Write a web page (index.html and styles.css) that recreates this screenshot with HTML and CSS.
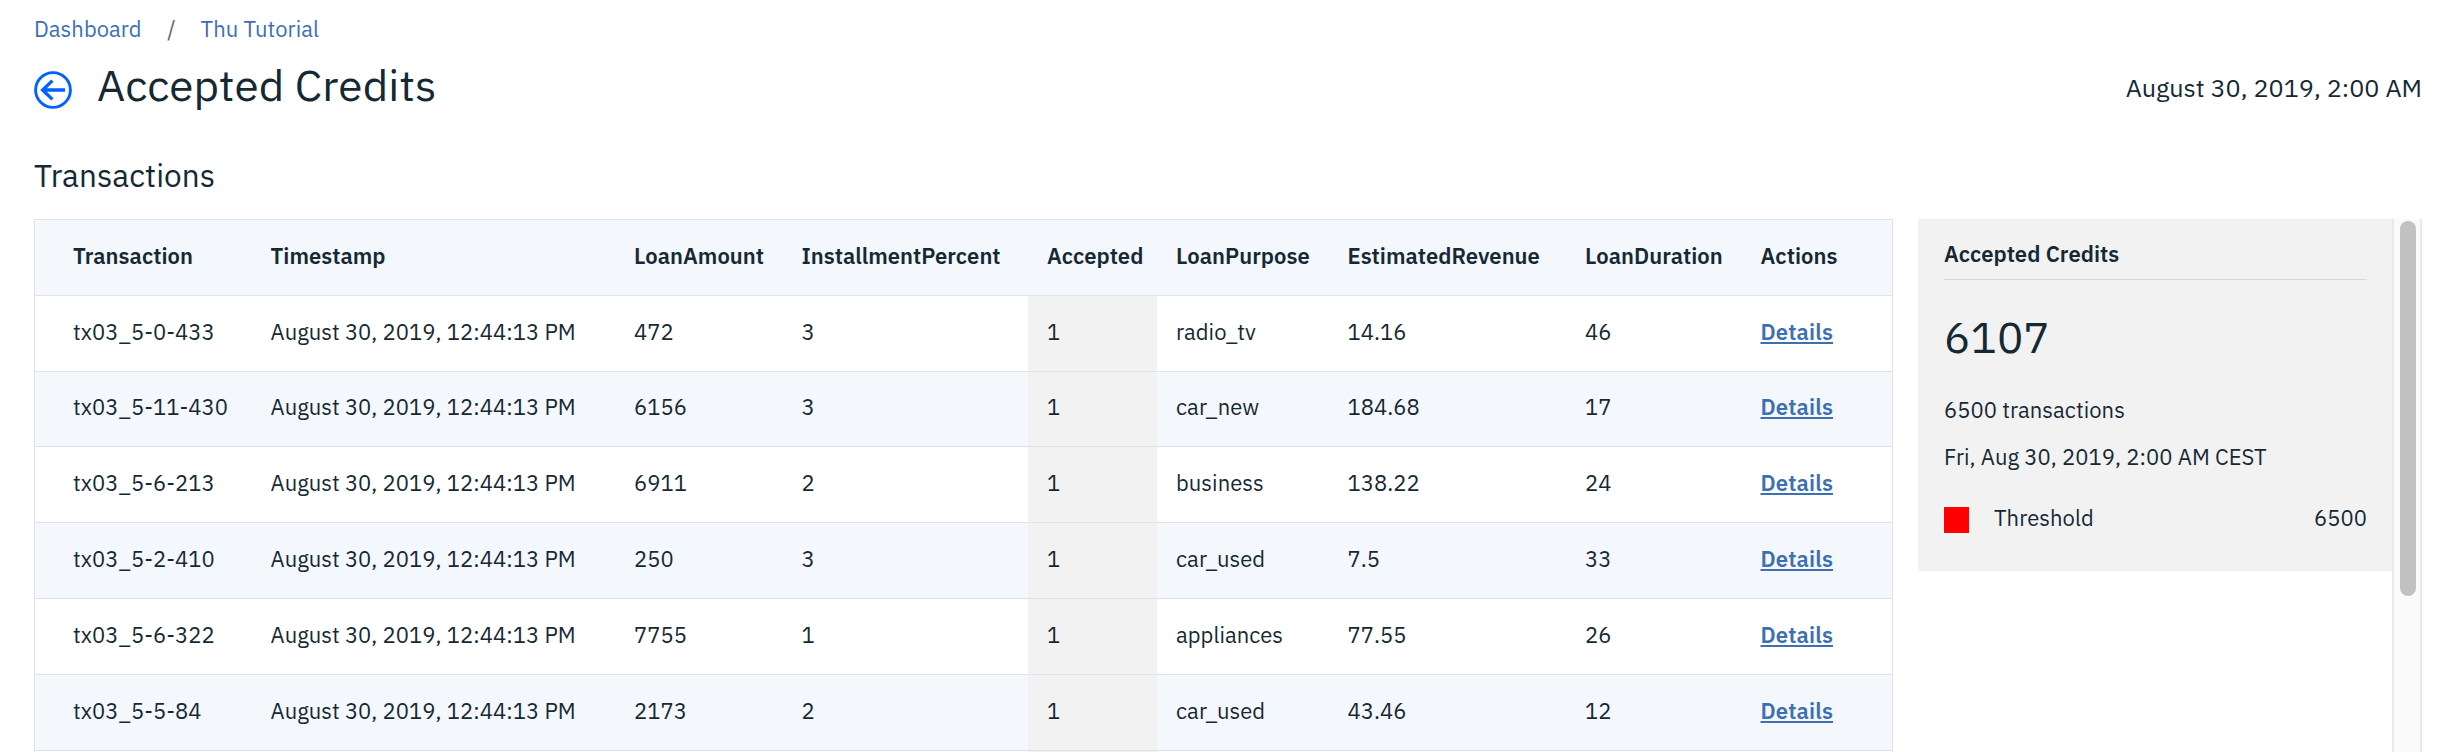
FILE: index.html
```
<!DOCTYPE html>
<html lang="en">
<head>
<meta charset="utf-8">
<title>Accepted Credits</title>
<link rel="stylesheet" href="styles.css">
</head>
<body>
<div class="page">
  <nav class="breadcrumb">
    <a class="crumb" href="#">Dashboard</a>
    <span class="crumb-sep">/</span>
    <a class="crumb" href="#">Thu Tutorial</a>
  </nav>
  <header class="page-header">
    <svg class="back-icon" viewBox="0 0 38 38" fill="none" stroke="#0062ff">
      <circle cx="19" cy="19" r="17.4" stroke-width="2.9"/>
      <path d="M31 19H8M18.4 9.6L8.6 19l9.8 9.4" stroke-width="3.3"/>
    </svg>
    <h1 class="page-title">Accepted Credits</h1>
    <time class="page-date">August 30, 2019, 2:00 AM</time>
  </header>
  <h2 class="section-title">Transactions</h2>
  <div class="content">
    <table class="tx-table">
      <thead>
        <tr><th>Transaction</th><th>Timestamp</th><th>LoanAmount</th><th>InstallmentPercent</th><th>Accepted</th><th>LoanPurpose</th><th>EstimatedRevenue</th><th>LoanDuration</th><th>Actions</th></tr>
      </thead>
      <tbody>
        <tr><td>tx03_5-0-433</td><td>August 30, 2019, 12:44:13 PM</td><td>472</td><td>3</td><td class="accepted">1</td><td>radio_tv</td><td>14.16</td><td>46</td><td><a class="details" href="#">Details</a></td></tr>
        <tr><td>tx03_5-11-430</td><td>August 30, 2019, 12:44:13 PM</td><td>6156</td><td>3</td><td class="accepted">1</td><td>car_new</td><td>184.68</td><td>17</td><td><a class="details" href="#">Details</a></td></tr>
        <tr><td>tx03_5-6-213</td><td>August 30, 2019, 12:44:13 PM</td><td>6911</td><td>2</td><td class="accepted">1</td><td>business</td><td>138.22</td><td>24</td><td><a class="details" href="#">Details</a></td></tr>
        <tr><td>tx03_5-2-410</td><td>August 30, 2019, 12:44:13 PM</td><td>250</td><td>3</td><td class="accepted">1</td><td>car_used</td><td>7.5</td><td>33</td><td><a class="details" href="#">Details</a></td></tr>
        <tr><td>tx03_5-6-322</td><td>August 30, 2019, 12:44:13 PM</td><td>7755</td><td>1</td><td class="accepted">1</td><td>appliances</td><td>77.55</td><td>26</td><td><a class="details" href="#">Details</a></td></tr>
        <tr><td>tx03_5-5-84</td><td>August 30, 2019, 12:44:13 PM</td><td>2173</td><td>2</td><td class="accepted">1</td><td>car_used</td><td>43.46</td><td>12</td><td><a class="details" href="#">Details</a></td></tr>
        <tr><td></td><td></td><td></td><td></td><td class="accepted"></td><td></td><td></td><td></td><td></td></tr>
      </tbody>
    </table>
    <aside class="sidebar">
      <section class="card">
        <h3 class="card-title">Accepted Credits</h3>
        <p class="card-value">6107</p>
        <p class="card-line">6500 transactions</p>
        <p class="card-line">Fri, Aug 30, 2019, 2:00 AM CEST</p>
        <div class="legend">
          <span class="swatch"></span>
          <span class="legend-label">Threshold</span>
          <span>6500</span>
        </div>
      </section>
      <div class="scroll-track"><div class="scroll-thumb"></div></div>
    </aside>
  </div>
</div>
</body>
</html>
```

FILE: styles.css
```
* { box-sizing: border-box; margin: 0; padding: 0; }
body {
  font-family: "IBM Plex Sans", Roboto, sans-serif;
  font-size: 22px;
  letter-spacing: 0.04px;
  color: #152935;
  background: #fff;
  overflow: hidden;
}
a { color: #3d70b2; text-decoration: none; }
.page {
  height: 752px;
  padding: 14px 32px 0 34px;
  display: flex;
  flex-direction: column;
  overflow: hidden;
}
.breadcrumb {
  display: flex;
  height: 30px;
  line-height: 30px;
}
.crumb-sep { margin: 0 25px 0 25.5px; color: #5a6872; }
.page-header {
  display: flex;
  height: 86px;
  padding-top: 12px;
}
.back-icon { width: 38px; height: 38px; margin-top: 15px; }
.page-title {
  margin-left: 25px;
  flex: 1;
  font-size: 44px;
  font-weight: 400;
  line-height: 58px;
  letter-spacing: 0.13px;
}
.page-date { font-size: 25.2px; letter-spacing: 0; line-height: 64px; }
.section-title {
  height: 89px;
  padding-top: 24px;
  font-size: 31.5px;
  font-weight: 400;
  line-height: 44px;
}
.content {
  flex: 1;
  min-height: 0;
  display: flex;
  gap: 25px;
}
.tx-table {
  display: block;
  width: 1859px;
  flex: none;
  border: 1px solid #dfe3e6;
  border-bottom: 0;
}
.tx-table thead, .tx-table tbody { display: block; }
.tx-table tr {
  display: grid;
  grid-template-columns: 216.5px 363.5px 167.5px 245.5px 129px 171.5px 237.5px 175.5px 1fr;
  height: 75.8px;
}
.tx-table th, .tx-table td {
  padding-left: 19px;
  border-bottom: 1px solid #dfe3e6;
  line-height: 71px;
  text-align: left;
  white-space: nowrap;
}
.tx-table tbody tr:nth-child(2) td { line-height: 70px; }
.tx-table th:first-child, .tx-table td:first-child { padding-left: 38px; }
.tx-table th { font-weight: 600; }
.tx-table thead tr, .tx-table tbody tr:nth-child(even) { background: #f4f7fb; }
.tx-table .accepted { background: #f2f2f2; }
.details {
  font-weight: 600;
  letter-spacing: 0.15px;
  text-decoration: underline;
  text-decoration-thickness: 2px;
  text-underline-offset: 2px;
}
.sidebar { flex: 1; display: flex; align-items: flex-start; }
.card {
  flex: 1;
  height: 352px;
  padding: 15px 25px 0 26px;
  background: #f2f2f2;
}
.card-title {
  height: 46px;
  font-size: 22px;
  font-weight: 600;
  line-height: 40px;
  border-bottom: 1px solid #d5d8da;
}
.card-value { font-size: 44px; line-height: 60px; margin: 27px 0 19px; }
.card-line { line-height: 47px; }
.legend {
  display: flex;
  margin-top: 14px;
  line-height: 47px;
}
.swatch { width: 25px; height: 26px; margin: 13px 25px 0 0; background: #f00; }
.legend-label { flex: 1; }
.scroll-track {
  width: 30px;
  height: 533px;
  padding: 2px 0 0 6px;
  background: #fafafa;
  border: solid #e9e9e9;
  border-width: 0 2px;
}
.scroll-thumb { width: 16px; height: 375px; border-radius: 8px; background: #c1c1c1; }
```
